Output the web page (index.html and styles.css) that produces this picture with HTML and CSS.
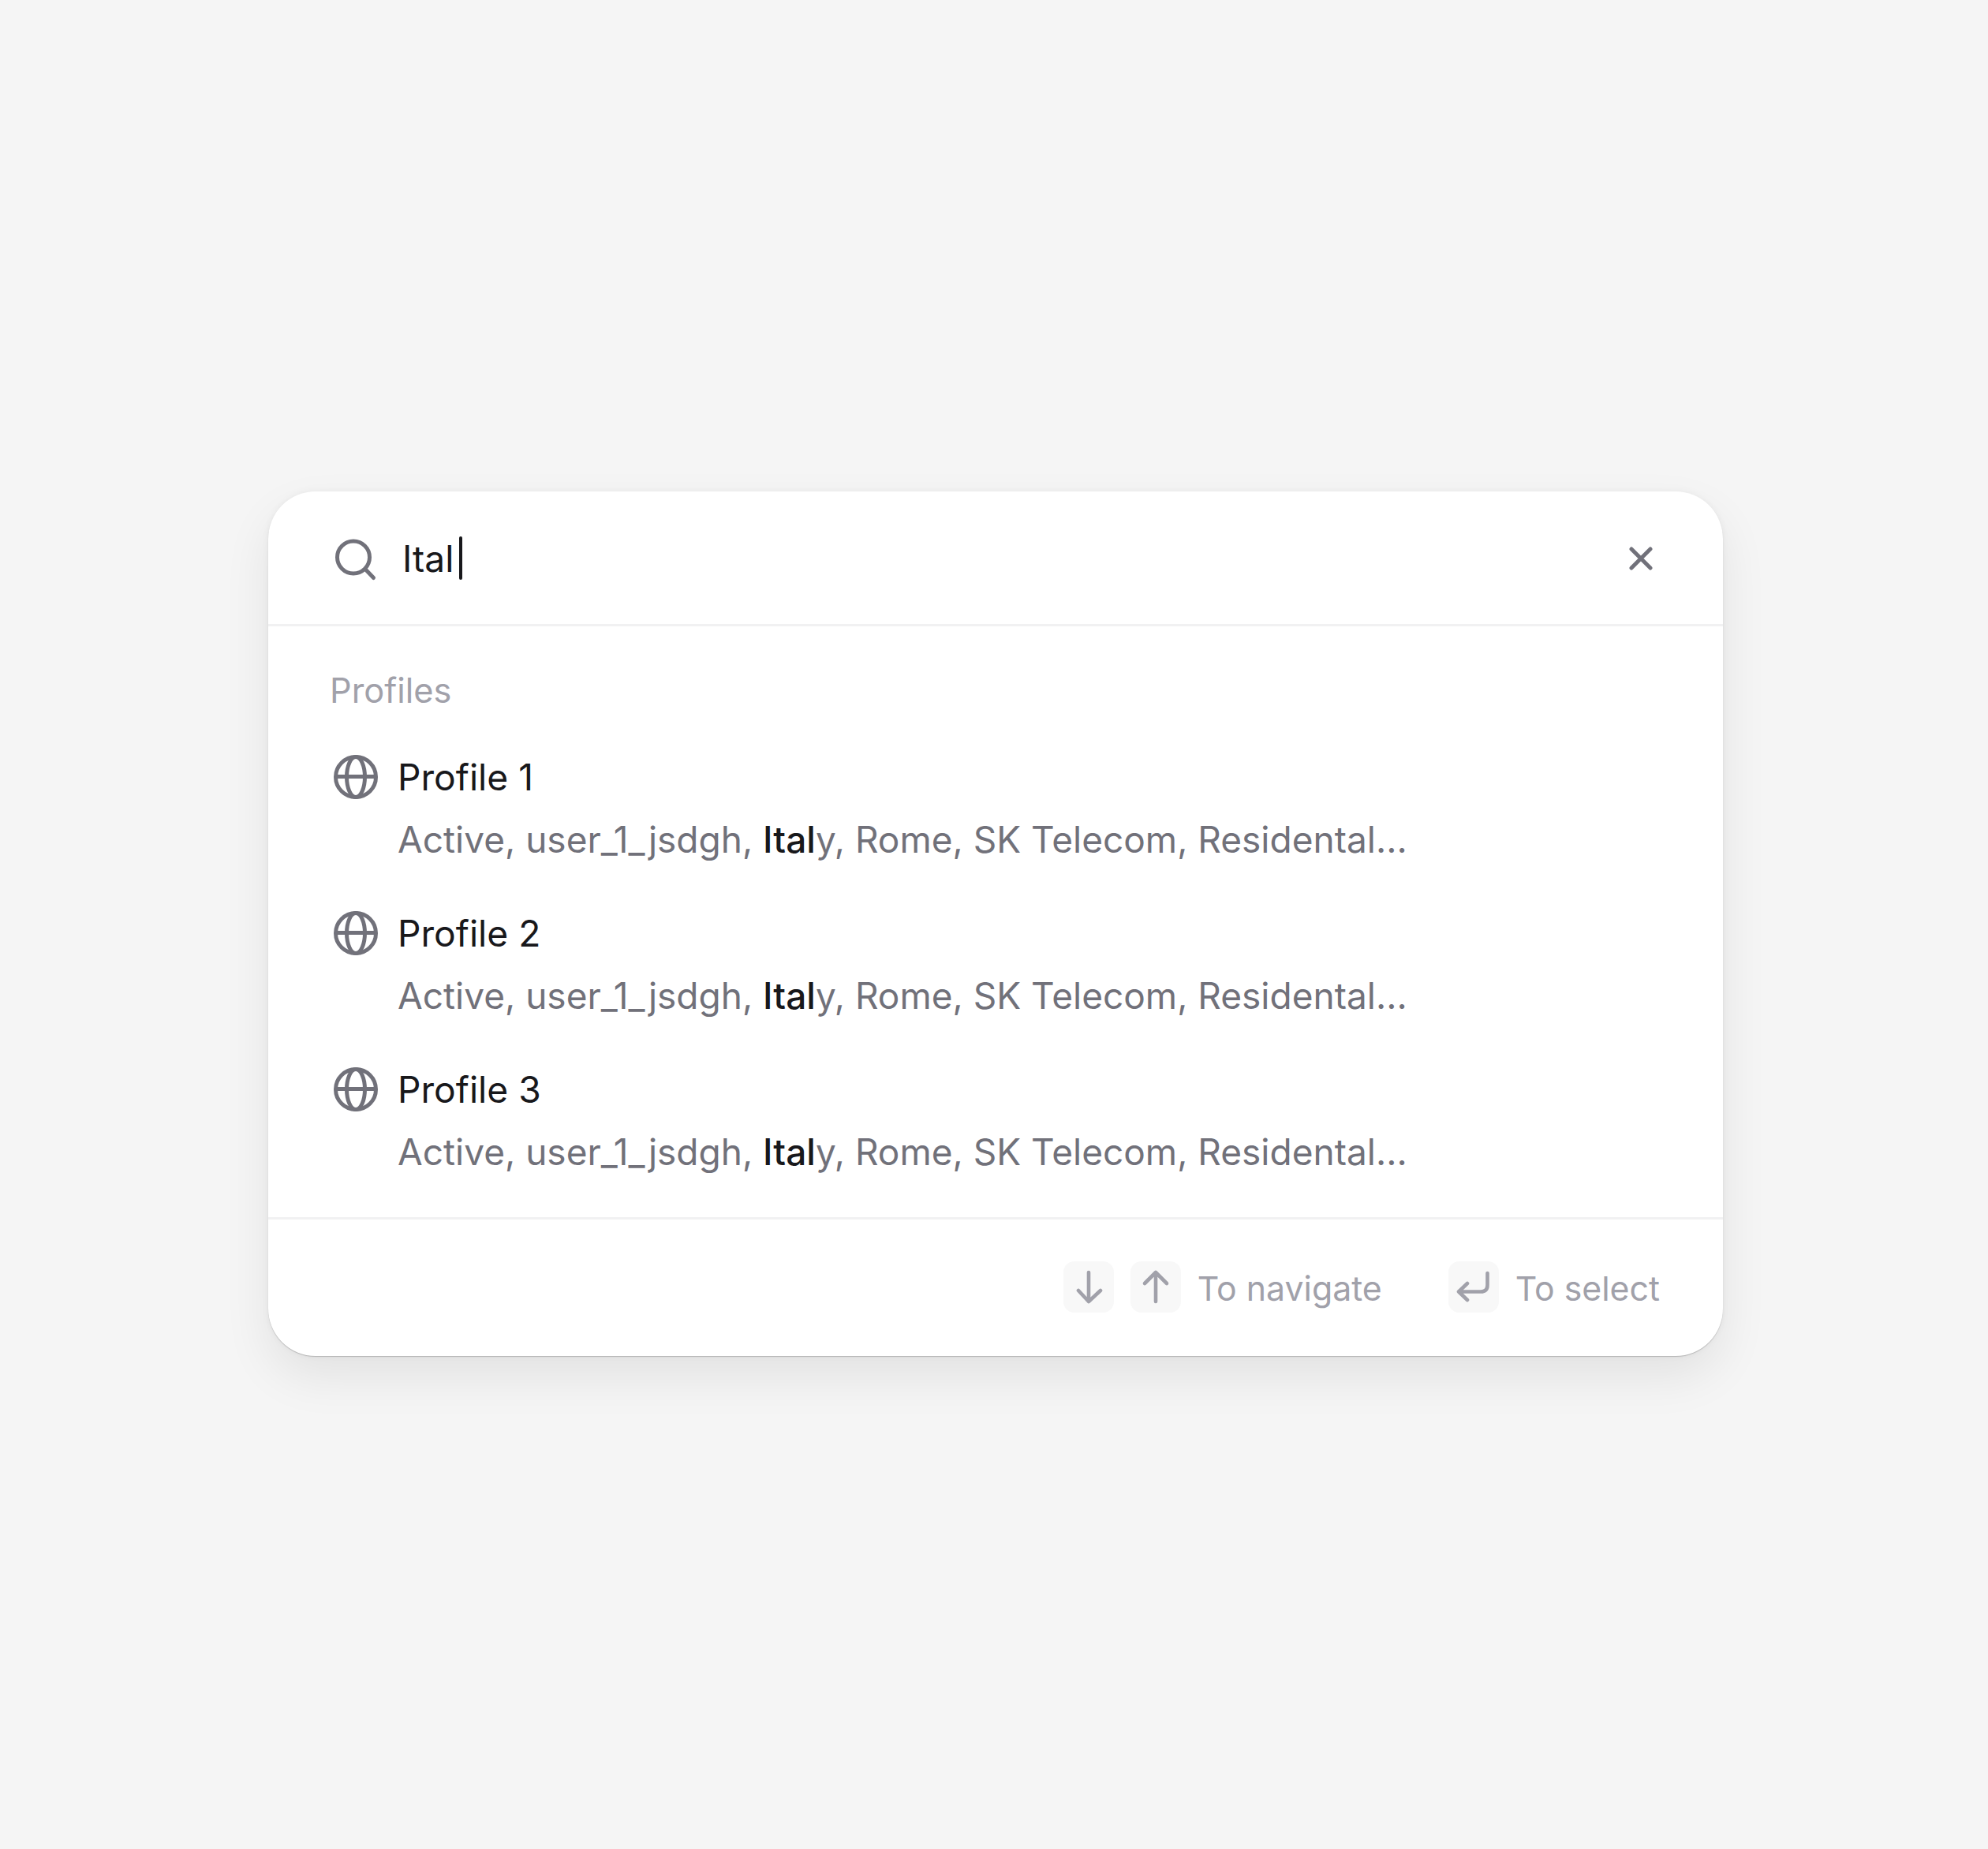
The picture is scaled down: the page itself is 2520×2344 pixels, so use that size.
FILE: index.html
```html
<!DOCTYPE html>
<html lang="en">
<head>
<meta charset="utf-8">
<title>Search</title>
<link rel="stylesheet" href="styles.css">
</head>
<body>
<main class="card">
  <header class="search">
    <svg class="icon-search" viewBox="0 0 60 60"><circle cx="28" cy="28.5" r="20.5"/><path d="M43 43.5 53.5 54.5"/></svg>
    <div class="query">Ital<span class="caret"></span></div>
    <svg class="icon-close" viewBox="0 0 30 30"><path d="M3 3 27 27M27 3 3 27"/></svg>
  </header>
  <section class="results">
    <div class="label">Profiles</div>
    <div class="item">
      <svg class="icon-globe" viewBox="0 0 60 60"><circle cx="30" cy="30" r="25.5"/><ellipse cx="30" cy="30" rx="11.5" ry="25.5"/><path d="M4.5 29.5H55.5"/></svg>
      <div class="name">Profile 1</div>
      <div class="desc">Active, user_1_jsdgh, <b>Ital</b>y, Rome, SK Telecom, Residental...</div>
    </div>
    <div class="item">
      <svg class="icon-globe" viewBox="0 0 60 60"><circle cx="30" cy="30" r="25.5"/><ellipse cx="30" cy="30" rx="11.5" ry="25.5"/><path d="M4.5 29.5H55.5"/></svg>
      <div class="name">Profile 2</div>
      <div class="desc">Active, user_1_jsdgh, <b>Ital</b>y, Rome, SK Telecom, Residental...</div>
    </div>
    <div class="item">
      <svg class="icon-globe" viewBox="0 0 60 60"><circle cx="30" cy="30" r="25.5"/><ellipse cx="30" cy="30" rx="11.5" ry="25.5"/><path d="M4.5 29.5H55.5"/></svg>
      <div class="name">Profile 3</div>
      <div class="desc">Active, user_1_jsdgh, <b>Ital</b>y, Rome, SK Telecom, Residental...</div>
    </div>
  </section>
  <footer class="hints">
    <div class="hint">
      <span class="key"><svg viewBox="0 0 44 44"><path d="M22 4V41M9 27 22 41 37 27"/></svg></span>
      <span class="key"><svg viewBox="0 0 44 44"><path d="M22 41V4M8 18 22 4 36 18"/></svg></span>
      <span class="hint-text">To navigate</span>
    </div>
    <div class="hint">
      <span class="key"><svg viewBox="0 0 44 44"><path d="M39.5 5V20Q39.5 28.5 31 28.5H3M14 18 3 28.5 14 39"/></svg></span>
      <span class="hint-text">To select</span>
    </div>
  </footer>
</main>
</body>
</html>
```

FILE: styles.css
```css
* { box-sizing: border-box; }
html, body { margin: 0; height: 100%; }
body {
  background: #f5f5f5;
  font-family: Inter, "Liberation Sans", sans-serif;
  display: flex;
  justify-content: center;
  align-items: flex-start;
  padding: 623px 0 0;
  min-height: 2344px;
}
.card {
  width: 1844px;
  height: 1096px;
  margin-left: 4px;
  background: #fff;
  border-radius: 60px;
  box-shadow: 0 1px 1px rgba(0, 0, 0, .2), 0 0 8px rgba(0, 0, 0, .05), 0 26px 60px rgba(0, 0, 0, .08);
  display: flex;
  flex-direction: column;
}
.search {
  height: 171px;
  flex: none;
  border-bottom: 3px solid #f1f1f2;
  display: flex;
  align-items: center;
  padding: 1px 89px 0 80px;
}
.icon-search { width: 60px; height: 60px; flex: none; fill: none; stroke: #71717a; stroke-width: 5; stroke-linecap: round; }
.query {
  flex: 1;
  margin-left: 30px;
  font-size: 46px;
  color: #18181b;
  display: flex;
  align-items: center;
  line-height: 56px;
}
.caret { width: 4px; height: 55px; margin-left: 7px; background: #18181b; border-radius: 2px; }
.icon-close { width: 30px; height: 30px; flex: none; fill: none; stroke: #71717a; stroke-width: 5; stroke-linecap: round; }
.results {
  height: 752px;
  flex: none;
  border-bottom: 3px solid #f1f1f2;
  padding: 49px 78px 0;
}
.label { font-size: 43.3px; line-height: 64px; color: #a1a1aa; margin-bottom: 46px; }
.item {
  display: grid;
  grid-template-columns: 86px 1fr;
  grid-auto-rows: 64px;
  align-items: center;
  row-gap: 15px;
  margin-bottom: 54.8px;
}
.icon-globe { width: 60px; height: 60px; margin-left: 3px; fill: none; stroke: #71717a; stroke-width: 5; }
.name { font-size: 46.2px; color: #18181b; line-height: 64px; }
.desc { grid-column: 2; font-size: 46px; line-height: 64px; color: #71717a; white-space: nowrap; }
.desc b { font-weight: 500; color: #18181b; }
.hints {
  flex: 1;
  display: flex;
  justify-content: flex-end;
  align-items: center;
  gap: 84px;
  padding: 0 80px 3px 0;
}
.hint { display: flex; align-items: center; }
.key {
  width: 64px;
  height: 65px;
  margin-right: 21px;
  background: #f8f8f8;
  border-radius: 14px;
  display: flex;
  align-items: center;
  justify-content: center;
}
.key svg { width: 44px; height: 44px; fill: none; stroke: #a1a1aa; stroke-width: 4.6; stroke-linecap: round; stroke-linejoin: round; }
.hint-text { font-size: 42.8px; line-height: 64px; color: #a1a1aa; margin-top: 6px; }
```
